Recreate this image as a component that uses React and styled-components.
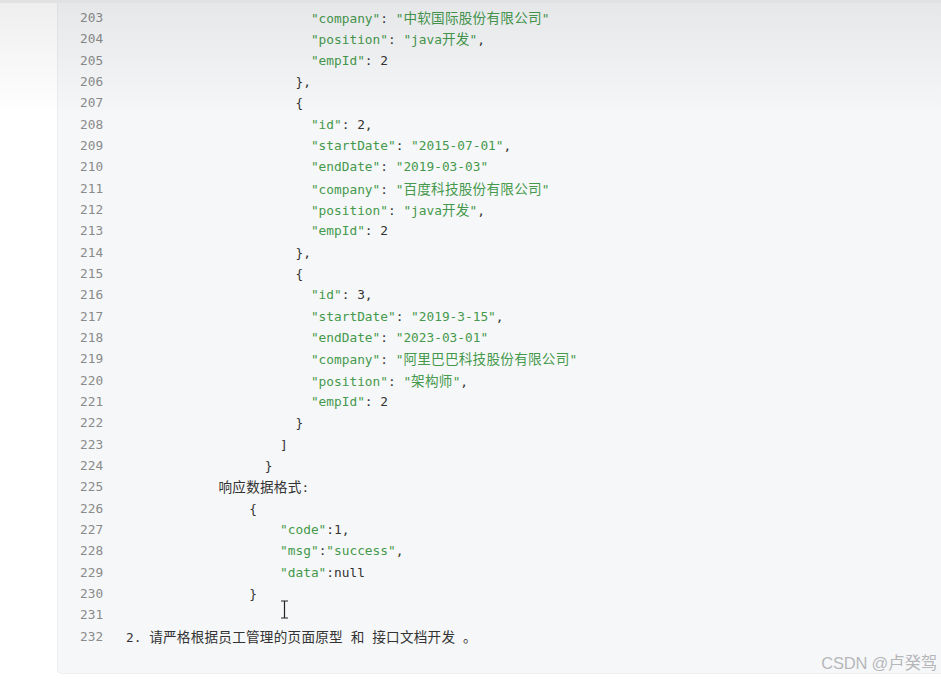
import React from 'react';
import styled, { createGlobalStyle } from 'styled-components';

const GlobalStyle = createGlobalStyle`
  html, body {
    margin: 0;
    padding: 0;
    background: #ffffff;
    overflow: hidden;
  }
`;

const Page = styled.div`
  position: relative;
  width: 941px;
  height: 680px;
  overflow: hidden;
  background: #ffffff;
  padding-left: 57px;
  box-sizing: border-box;
`;

const TopShade = styled.div`
  position: absolute;
  left: 0;
  right: 0;
  top: 0;
  height: 120px;
  border-top: 3px solid #e2e2e3;
  background: linear-gradient(rgba(40, 45, 55, 0.08), rgba(40, 45, 55, 0) 115px);
  pointer-events: none;
`;

const CodeBlock = styled.div`
  background: #f6f7f8;
  border-left: 1px solid #eceef0;
  border-bottom: 1px solid #eceef0;
  border-bottom-left-radius: 5px;
  padding: 7px 0 26px 22px;
  font-family: 'DejaVu Sans Mono', 'Liberation Mono', monospace;
  font-size: 12.8px;
  color: #333333;
`;

const Line = styled.div`
  display: flex;
  height: 21.34px;
  line-height: 21.34px;
  white-space: pre;
`;

const LineNo = styled.span`
  width: 46px;
  flex: none;
  color: #8a8a8a;
`;

const Code = styled.span`
  color: #333333;
`;

const Str = styled.span`
  color: #45994c;
`;

const Cjk = styled.span`
  font-family: 'Noto Sans CJK SC', sans-serif;
  font-size: 13.6px;
  letter-spacing: 0.25px;
`;

const Watermark = styled.div`
  position: absolute;
  right: 4px;
  bottom: 6px;
  font-family: 'Liberation Sans', 'Noto Sans CJK SC', sans-serif;
  font-size: 16.5px;
  color: #b4b6b9;
  text-shadow: 0 0 1px #ffffff;
  letter-spacing: -0.2px;
`;

const Caret = styled.svg`
  position: absolute;
  left: 280px;
  top: 600px;
`;

const lines = [
  [24, '"company": "中软国际股份有限公司"'],
  [24, '"position": "java开发",'],
  [24, '"empId": 2'],
  [22, '},'],
  [22, '{'],
  [24, '"id": 2,'],
  [24, '"startDate": "2015-07-01",'],
  [24, '"endDate": "2019-03-03"'],
  [24, '"company": "百度科技股份有限公司"'],
  [24, '"position": "java开发",'],
  [24, '"empId": 2'],
  [22, '},'],
  [22, '{'],
  [24, '"id": 3,'],
  [24, '"startDate": "2019-3-15",'],
  [24, '"endDate": "2023-03-01"'],
  [24, '"company": "阿里巴巴科技股份有限公司"'],
  [24, '"position": "架构师",'],
  [24, '"empId": 2'],
  [22, '}'],
  [20, ']'],
  [18, '}'],
  [12, '响应数据格式:'],
  [16, '{'],
  [20, '"code":1,'],
  [20, '"msg":"success",'],
  [20, '"data":null'],
  [16, '}'],
  [0, ''],
  [0, '2. 请严格根据员工管理的页面原型 和 接口文档开发 。'],
];

const withCjk = (text) =>
  text.split(/([\u3000-\u303f\u4e00-\u9fff]+)/).map((part, i) =>
    /[\u3000-\u303f\u4e00-\u9fff]/.test(part) ? <Cjk key={i}>{part}</Cjk> : part
  );

const renderCode = (text) =>
  text.split(/("[^"]*")/).map((part, i) =>
    part.startsWith('"') ? <Str key={i}>{withCjk(part)}</Str> : <React.Fragment key={i}>{withCjk(part)}</React.Fragment>
  );

const App = () => (
  <Page>
    <GlobalStyle />
    <CodeBlock>
      {lines.map(([indent, text], i) => (
        <Line key={i}>
          <LineNo>{203 + i}</LineNo>
          <Code>
            {' '.repeat(indent)}
            {renderCode(text)}
          </Code>
        </Line>
      ))}
    </CodeBlock>
    <TopShade />
    <Caret width="9" height="19" viewBox="0 0 9 19">
      <path d="M1 1h7M4.5 1v17M1 18h7" stroke="#222" strokeWidth="1.2" fill="none" />
    </Caret>
    <Watermark>CSDN @卢癸驾</Watermark>
  </Page>
);

export default App;
